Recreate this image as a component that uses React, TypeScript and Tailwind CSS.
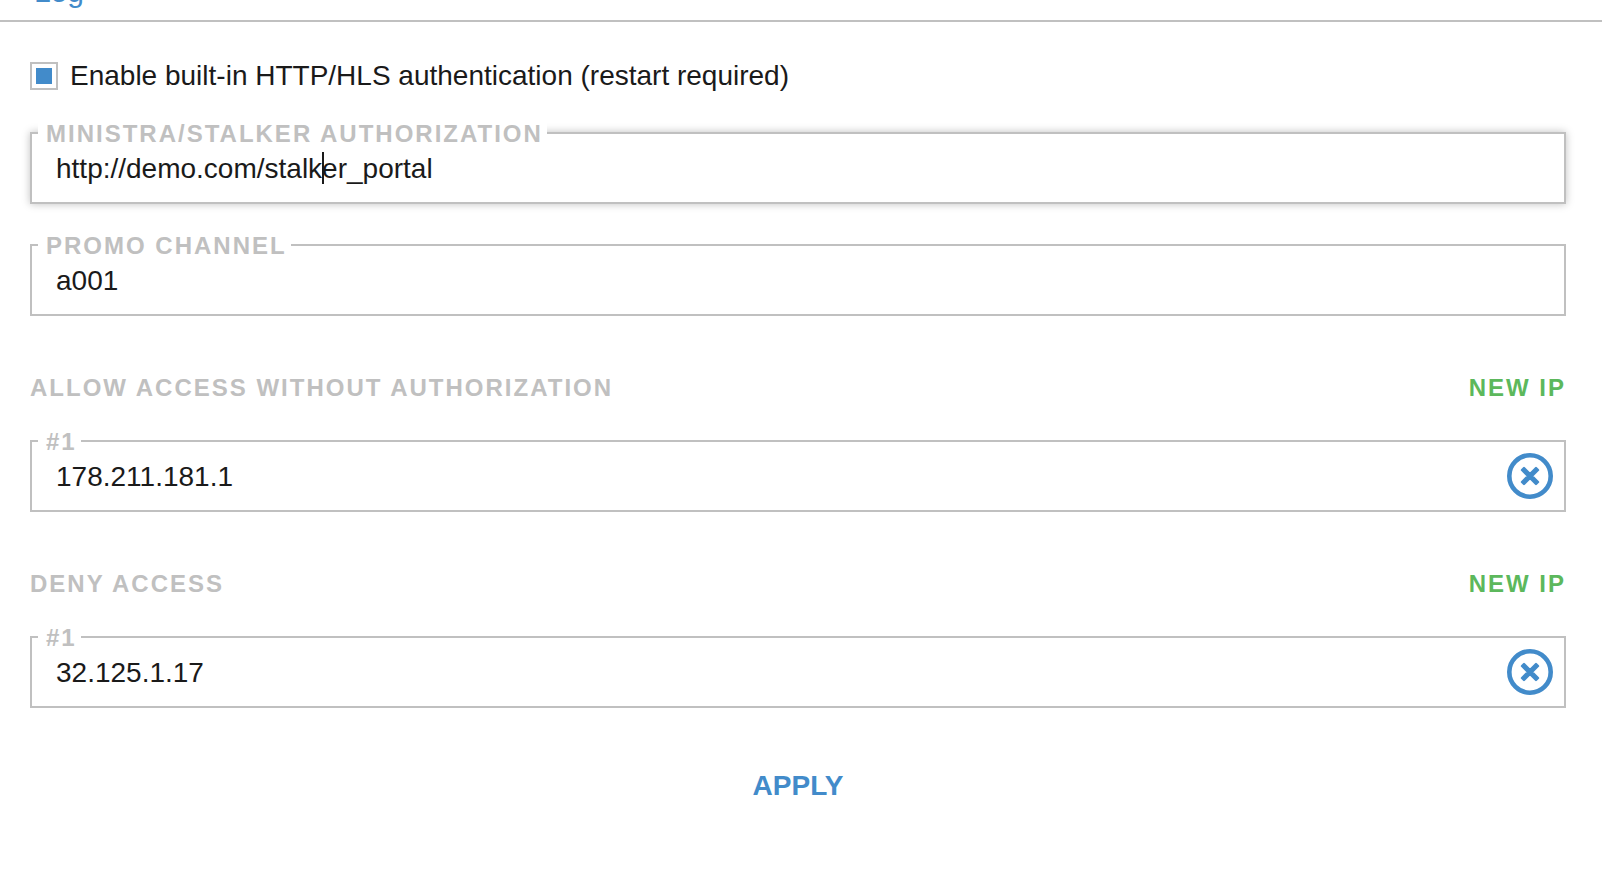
import { useId, useState } from "react";

type FieldProps = {
  label: string;
  initial: string;
  active?: boolean;
  onRemove?: () => void;
};

function RemoveIcon() {
  return (
    <svg viewBox="0 0 46 46" className="size-full" fill="none" stroke="currentColor" aria-hidden="true">
      <circle cx="23" cy="23" r="20.7" strokeWidth="4.6" />
      <path
        d="M17 15 23 21l6-6 2 2L25 23l6 6-2 2L23 25l-6 6-2-2L21 23l-6-6Z"
        fill="currentColor"
        strokeWidth="2.4"
        strokeLinejoin="round"
      />
    </svg>
  );
}

function Field({ label, initial, active = false, onRemove }: FieldProps) {
  const id = useId();
  const [value, setValue] = useState(initial);
  return (
    <div className="relative">
      <input
        id={id}
        type="text"
        value={value}
        onChange={(e) => setValue(e.target.value)}
        className={`block h-18 w-full border-2 border-[#c0c0c0] bg-white px-6 pt-0.5 text-[28px] text-[#1a1a1a] outline-none ${
          active ? "shadow-[0_0_8px_rgba(0,0,0,0.25)]" : ""
        }`}
      />
      <label
        htmlFor={id}
        className="absolute -top-3 left-2 bg-white pr-1 pl-2 text-2xl leading-7 font-bold tracking-[2px] text-[#c0c0c0] uppercase"
      >
        {label}
      </label>
      {active && <span className="absolute top-5 left-[292px] h-8 w-0.5 bg-[#1a1a1a]" />}
      {onRemove && (
        <button
          type="button"
          aria-label="Remove"
          onClick={onRemove}
          className="absolute top-3 right-3 size-12 p-px text-[#428bca]"
        >
          <RemoveIcon />
        </button>
      )}
    </div>
  );
}

function AddressSection({ title, initial }: { title: string; initial: string[] }) {
  const [items, setItems] = useState(initial);
  return (
    <section className="mt-14">
      <div className="mb-9 flex items-center justify-between text-2xl leading-8 font-bold tracking-[2px] uppercase">
        <h2 className="text-[#c0c0c0]">{title}</h2>
        <button type="button" onClick={() => setItems([...items, ""])} className="uppercase text-[#5cb85c]">
          New IP
        </button>
      </div>
      <div className="flex flex-col gap-10">
        {items.map((ip, i) => (
          <Field
            key={`${i}-${ip}`}
            label={`#${i + 1}`}
            initial={ip}
            onRemove={() => setItems(items.filter((_, n) => n !== i))}
          />
        ))}
      </div>
    </section>
  );
}

export default function App() {
  const [enabled, setEnabled] = useState(true);
  return (
    <div className="min-h-screen bg-white font-['Liberation_Sans',Arial,sans-serif] text-[#1a1a1a]">
      <nav className="flex h-[22px] items-end overflow-hidden border-b-2 border-[#c0c0c0] pb-3 pl-[34px]">
        <a href="#log" className="text-[30px] leading-8 text-[#428bca]">
          Log
        </a>
      </nav>
      <form className="pt-[38px] pr-9 pl-[30px]" onSubmit={(e) => e.preventDefault()}>
        <label className="flex items-center gap-3 text-[28px] leading-8">
          <input
            type="checkbox"
            checked={enabled}
            onChange={(e) => setEnabled(e.target.checked)}
            className="size-7 shrink-0 appearance-none border-2 border-[#c0c0c0] bg-white bg-clip-content p-1 checked:bg-[#428bca]"
          />
          Enable built-in HTTP/HLS authentication (restart required)
        </label>
        <div className="mt-10 flex flex-col gap-10">
          <Field label="Ministra/Stalker authorization" initial="http://demo.com/stalker_portal" active />
          <Field label="Promo channel" initial="a001" />
        </div>
        <AddressSection title="Allow access without authorization" initial={["178.211.181.1"]} />
        <AddressSection title="Deny access" initial={["32.125.1.17"]} />
        <div className="mt-15 flex justify-center">
          <button type="submit" className="text-[28px] leading-9 font-bold uppercase text-[#428bca]">
            Apply
          </button>
        </div>
      </form>
    </div>
  );
}
